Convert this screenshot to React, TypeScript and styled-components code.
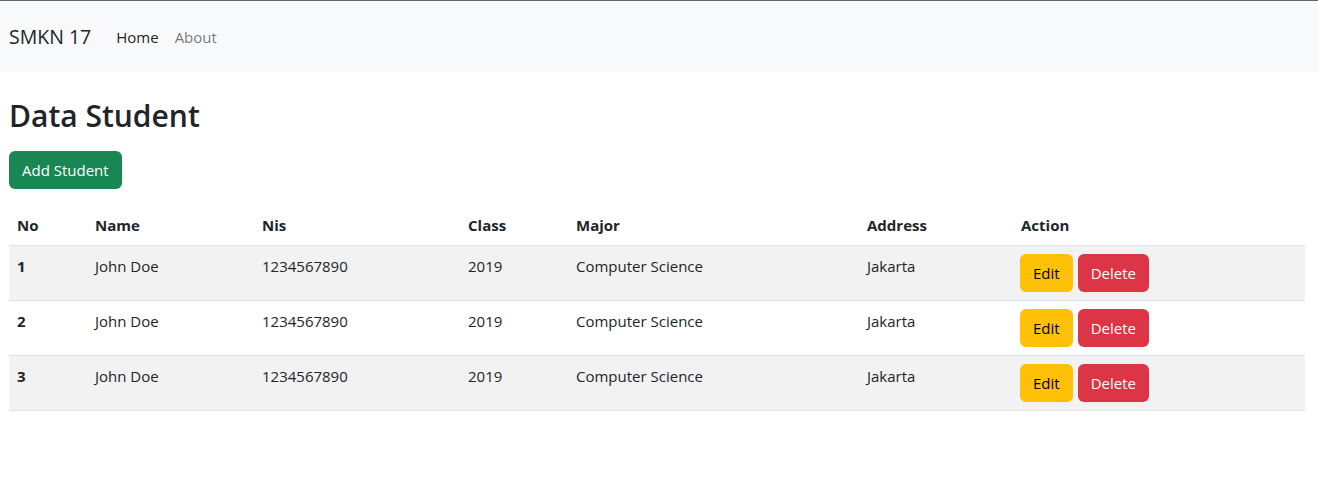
import React from "react";
import styled, { createGlobalStyle } from "styled-components";

const Global = createGlobalStyle`
  * { box-sizing: border-box; }
  body {
    margin: 0;
    font-family: "Open Sans", "Noto Sans", sans-serif;
    font-size: 15px;
    line-height: 24px;
    color: #212529;
    background: #fff;
  }
`;

const TopLine = styled.div`
  height: 1px;
  background: #5f6368;
`;

const Navbar = styled.nav`
  height: 71px;
  background: #f8f9fa;
  display: flex;
  align-items: center;
  padding: 0 9px;
`;

const Brand = styled.a`
  font-size: 19.5px;
  color: #212529;
  text-decoration: none;
  margin-right: 25px;
`;

const NavLinks = styled.div`
  display: flex;
  gap: 16px;
`;

const NavLink = styled.a<{ $active?: boolean }>`
  font-size: 15px;
  text-decoration: none;
  color: ${(p) => (p.$active ? "rgba(0,0,0,0.9)" : "rgba(0,0,0,0.55)")};
`;

const Main = styled.main`
  padding: 24px 13px 0 9px;
`;

const Title = styled.h1`
  margin: 0 0 16px;
  font-size: 30px;
  font-weight: 600;
  line-height: 39px;
`;

const Button = styled.button<{ $variant: "success" | "warning" | "danger" }>`
  font-family: inherit;
  font-size: 15px;
  line-height: 24px;
  border: 1px solid transparent;
  border-radius: 6px;
  padding: 6px 12px;
  cursor: pointer;
  background: ${(p) =>
    p.$variant === "success" ? "#198754" : p.$variant === "warning" ? "#ffc107" : "#dc3545"};
  color: ${(p) => (p.$variant === "warning" ? "#000" : "#fff")};
`;

const AddButton = styled(Button)`
  display: block;
  margin-bottom: 16px;
`;

const Table = styled.table`
  width: 100%;
  border-collapse: collapse;
  table-layout: fixed;
`;

const Th = styled.th`
  text-align: left;
  font-weight: 700;
  padding: 8px;
  border-bottom: 1px solid #dee2e6;
  vertical-align: bottom;
`;

const Tr = styled.tr<{ $striped: boolean }>`
  background: ${(p) => (p.$striped ? "#f2f2f2" : "#fff")};
`;

const Td = styled.td<{ $bold?: boolean }>`
  padding: 8px;
  border-bottom: 1px solid #dee2e6;
  vertical-align: top;
  font-weight: ${(p) => (p.$bold ? 700 : 400)};
`;

const Actions = styled.div`
  display: flex;
  gap: 5px;
  margin-left: -1px;
`;

const cols = [78, 167, 206, 108, 291, 154, 292];

const rows = [1, 2, 3];

export default function App() {
  return (
    <>
      <Global />
      <TopLine />
      <Navbar>
        <Brand href="#">SMKN 17</Brand>
        <NavLinks>
          <NavLink $active href="#">Home</NavLink>
          <NavLink href="#">About</NavLink>
        </NavLinks>
      </Navbar>
      <Main>
        <Title>Data Student</Title>
        <AddButton $variant="success">Add Student</AddButton>
        <Table>
          <colgroup>
            {cols.map((w, i) => (
              <col key={i} style={{ width: w }} />
            ))}
          </colgroup>
          <thead>
            <tr>
              <Th>No</Th>
              <Th>Name</Th>
              <Th>Nis</Th>
              <Th>Class</Th>
              <Th>Major</Th>
              <Th>Address</Th>
              <Th>Action</Th>
            </tr>
          </thead>
          <tbody>
            {rows.map((n, i) => (
              <Tr key={n} $striped={i % 2 === 0}>
                <Td $bold>{n}</Td>
                <Td>John Doe</Td>
                <Td>1234567890</Td>
                <Td>2019</Td>
                <Td>Computer Science</Td>
                <Td>Jakarta</Td>
                <Td>
                  <Actions>
                    <Button $variant="warning">Edit</Button>
                    <Button $variant="danger">Delete</Button>
                  </Actions>
                </Td>
              </Tr>
            ))}
          </tbody>
        </Table>
      </Main>
    </>
  );
}
